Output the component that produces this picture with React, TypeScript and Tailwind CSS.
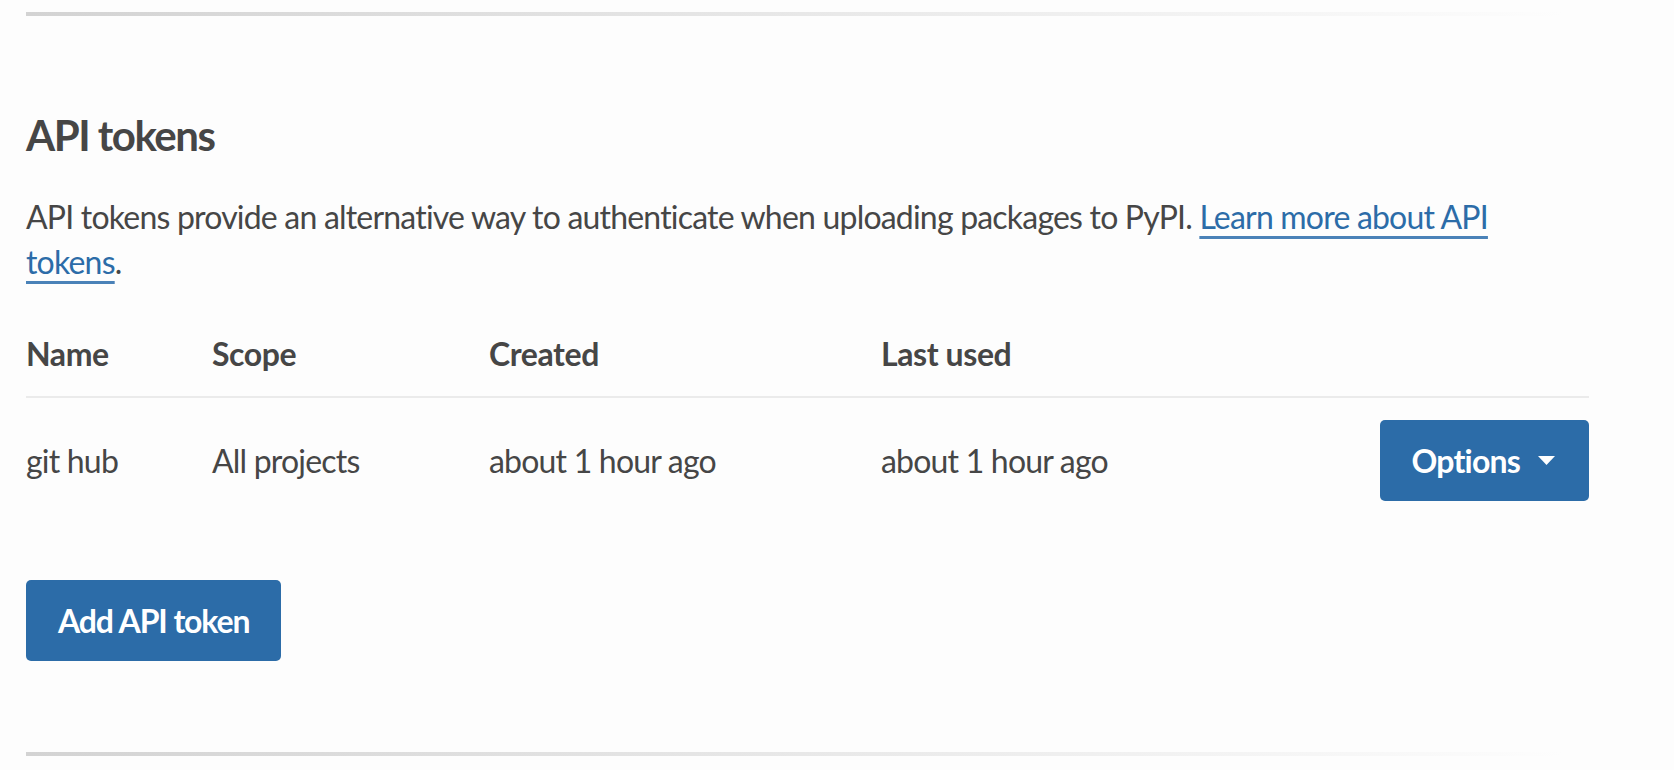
import React from 'react';

const tokens = [
  { name: 'git hub', scope: 'All projects', created: 'about 1 hour ago', lastUsed: 'about 1 hour ago' },
];

const Caret = () => (
  <svg width="17" height="9" viewBox="0 0 17 9" className="ml-[18px]" aria-hidden="true">
    <polygon points="0,0 17,0 8.5,9" fill="#ffffff" />
  </svg>
);

const Rule = ({ className = '' }: { className?: string }) => (
  <div className={`h-[4px] w-full bg-gradient-to-r from-[#d3d3d3] to-[#fdfdfd] ${className}`} />
);

export default function App() {
  return (
    <div className="min-h-screen bg-[#fdfdfd] font-['Lato',sans-serif] text-[#464646]">
      <div className="w-[1565px] pl-[26px] pt-[12px]">
        <Rule />

        {/* Section heading */}
        <h2 className="mt-[92px] text-[42px] font-bold leading-[55px] tracking-[-1.5px]">API tokens</h2>

        <p className="mt-[31px] text-[32px] leading-[45px] tracking-[-0.8px]">
          API tokens provide an alternative way to authenticate when uploading packages to PyPI.{' '}
          <a
            href="#"
            className="text-[#2c6ca8] underline decoration-[#4a82b8] decoration-[3px] underline-offset-[7px]"
          >
            Learn more about API tokens
          </a>
          .
        </p>

        {/* Tokens table */}
        <table className="mt-[28px] w-[1563px] border-collapse text-left text-[32px] leading-[45px]">
          <thead>
            <tr className="border-b-2 border-[#ebebeb]">
              <th className="w-[186px] pt-[19px] pb-[20px] font-bold tracking-[-0.4px]">Name</th>
              <th className="w-[277px] pt-[19px] pb-[20px] font-bold tracking-[-0.4px]">Scope</th>
              <th className="w-[392px] pt-[19px] pb-[20px] font-bold tracking-[-0.4px]">Created</th>
              <th className="pt-[19px] pb-[20px] font-bold tracking-[-0.4px]">Last used</th>
              <th className="pt-[19px] pb-[20px]"></th>
            </tr>
          </thead>
          <tbody>
            {tokens.map((t) => (
              <tr key={t.name} className="tracking-[-0.8px]">
                <td className="py-[22px]">{t.name}</td>
                <td className="py-[22px]">{t.scope}</td>
                <td className="py-[22px]">{t.created}</td>
                <td className="py-[22px]">{t.lastUsed}</td>
                <td className="py-[22px] text-right">
                  <button className="inline-flex h-[81px] items-center rounded-[5px] bg-[#2c6ca8] pl-[32px] pr-[34px] font-bold tracking-[-0.8px] text-white">
                    Options
                    <Caret />
                  </button>
                </td>
              </tr>
            ))}
          </tbody>
        </table>

        <button className="mt-[57px] flex h-[81px] items-center rounded-[5px] bg-[#2c6ca8] px-[32px] text-[32px] font-bold tracking-[-1.1px] text-white">
          Add API token
        </button>

        <Rule className="mt-[91px]" />
      </div>
    </div>
  );
}
